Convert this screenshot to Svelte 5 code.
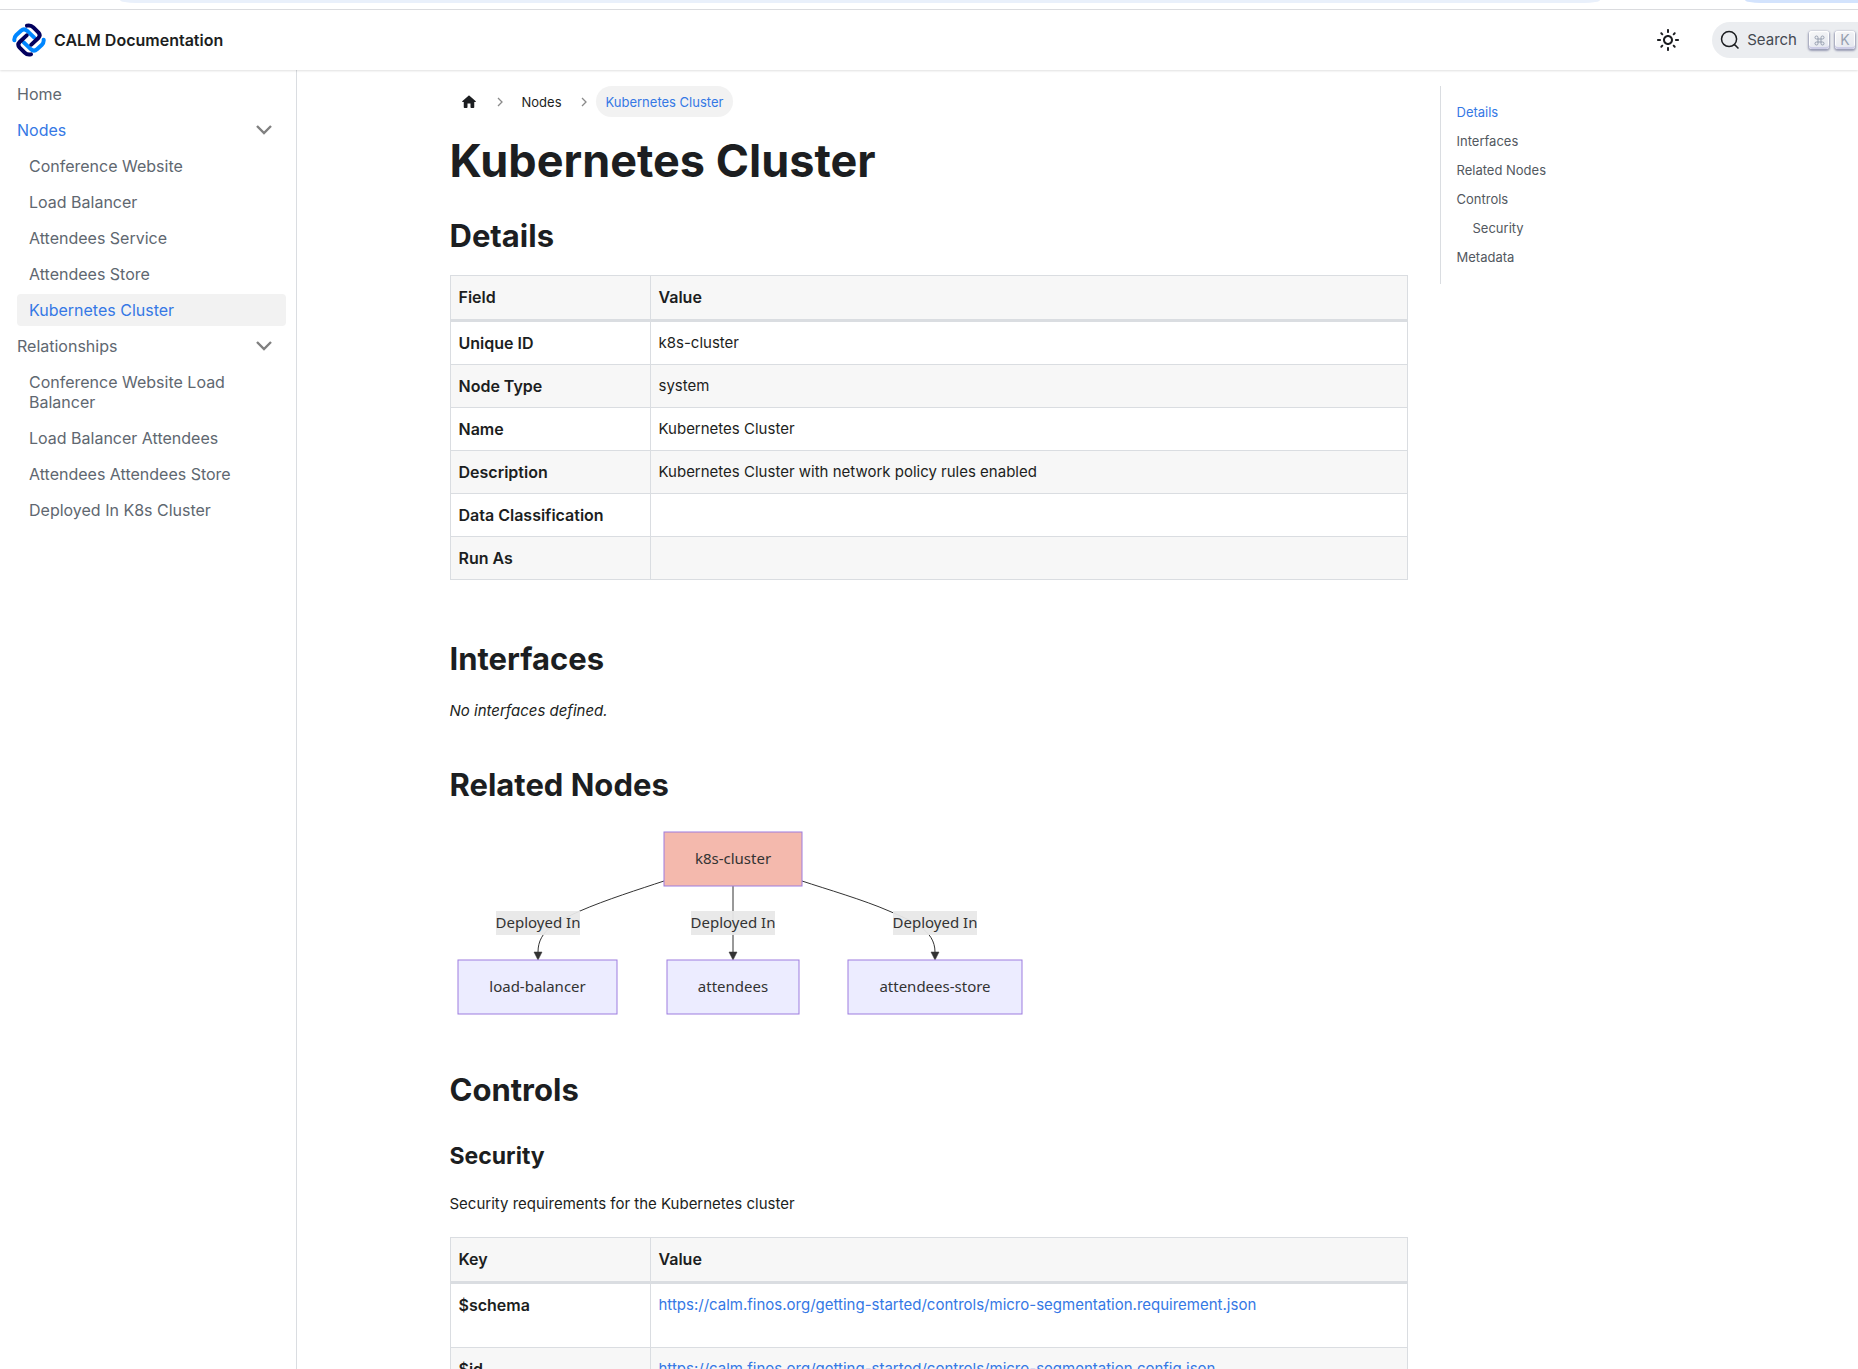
<script>
  const nodes = ['Conference Website', 'Load Balancer', 'Attendees Service', 'Attendees Store', 'Kubernetes Cluster'];
  const relationships = ['Conference Website Load Balancer', 'Load Balancer Attendees', 'Attendees Attendees Store', 'Deployed In K8s Cluster'];
  const current = 'Kubernetes Cluster';

  const details = [
    ['Unique ID', 'k8s-cluster'],
    ['Node Type', 'system'],
    ['Name', 'Kubernetes Cluster'],
    ['Description', 'Kubernetes Cluster with network policy rules enabled'],
    ['Data Classification', ''],
    ['Run As', '']
  ];

  const controls = [
    ['$schema', 'https://calm.finos.org/getting-started/controls/micro-segmentation.requirement.json'],
    ['$id', 'https://calm.finos.org/getting-started/controls/micro-segmentation.config.json']
  ];

  const toc = [
    { text: 'Details', active: true },
    { text: 'Interfaces' },
    { text: 'Related Nodes' },
    { text: 'Controls' },
    { text: 'Security', nested: true },
    { text: 'Metadata' }
  ];

  const boxes = [
    { x: 214, y: 8, w: 138, text: 'k8s-cluster', root: true },
    { x: 8, y: 136, w: 159, text: 'load-balancer' },
    { x: 217, y: 136, w: 132, text: 'attendees' },
    { x: 398, y: 136, w: 174, text: 'attendees-store' }
  ];
  const edges = [
    { x: 88, d: 'M214 57C190 65 155 76 130 87C108 97 88 106 88 128' },
    { x: 283, d: 'M283 62V128' },
    { x: 485, d: 'M352 57C376 65 414 76 439 87C462 97 485 106 485 128' }
  ];
</script>

{#snippet group(title, items, active)}
  <li>
    <button class="item group" class:active aria-expanded="true">
      {title}
      <svg width="20" height="12" viewBox="0 0 20 12" aria-hidden="true"><path d="M3 2l7 7 7-7" fill="none" stroke="#808080" stroke-width="2.4" /></svg>
    </button>
    <ul class="sub">
      {#each items as item}
        <li><a class="item" class:current={item === current} href="#top">{item}</a></li>
      {/each}
    </ul>
  </li>
{/snippet}

{#snippet crumbArrow()}
  <svg class="arrow" width="8" height="12" viewBox="0 0 8 12" aria-hidden="true"><path d="M2 2l4 4-4 4" fill="none" stroke="#8a8a8a" stroke-width="1.3" /></svg>
{/snippet}

<div class="page">
  <div class="chrome" aria-hidden="true">
    <span class="address"></span>
    <span class="profile"></span>
  </div>

  <header class="navbar">
    <a class="brand" href="#top">
      <svg width="34" height="34" viewBox="-51 -51 102 102" fill="none" stroke-width="12" stroke-linecap="round" stroke-linejoin="round" aria-hidden="true">
        <g stroke="#0086ff">
          <path d="M-44 1C-45-7-43-10-38-15L-24-28Q-15-36-6-28L15-8" />
          <path d="M44-1C45 7 43 10 38 15L24 28Q15 36 6 28L-15 8" />
        </g>
        <g stroke="#03005e">
          <path d="M-6-43C2-45 8-43 13-38L28-23Q36-14 28-6L7 14" />
          <path d="M6 43C-2 45-8 43-13 38L-28 23Q-36 14-28 6L-7-14" />
        </g>
      </svg>
      <span>CALM Documentation</span>
    </a>
    <button class="theme" aria-label="Switch colour mode">
      <svg width="24" height="24" viewBox="0 0 24 24" aria-hidden="true">
        <path fill="#1c1e21" d="M12,9c1.65,0,3,1.35,3,3s-1.35,3-3,3s-3-1.35-3-3S10.35,9,12,9 M12,7c-2.76,0-5,2.24-5,5s2.24,5,5,5s5-2.24,5-5 S14.76,7,12,7L12,7z M2,13l2,0c0.55,0,1-0.45,1-1s-0.45-1-1-1l-2,0c-0.55,0-1,0.45-1,1S1.45,13,2,13z M20,13l2,0c0.55,0,1-0.45,1-1 s-0.45-1-1-1l-2,0c-0.55,0-1,0.45-1,1S19.45,13,20,13z M11,2v2c0,0.55,0.45,1,1,1s1-0.45,1-1V2c0-0.55-0.45-1-1-1S11,1.45,11,2z M11,20v2c0,0.55,0.45,1,1,1s1-0.45,1-1v-2c0-0.55-0.45-1-1-1C11.45,19,11,19.45,11,20z M5.99,4.58c-0.39-0.39-1.03-0.39-1.41,0 c-0.39,0.39-0.39,1.03,0,1.41l1.06,1.06c0.39,0.39,1.03,0.39,1.41,0s0.39-1.03,0-1.41L5.99,4.58z M18.36,16.95 c-0.39-0.39-1.03-0.39-1.41,0c-0.39,0.39-0.39,1.03,0,1.41l1.06,1.06c0.39,0.39,1.03,0.39,1.41,0c0.39-0.39,0.39-1.03,0-1.41 L18.36,16.95z M19.42,5.99c0.39-0.39,0.39-1.03,0-1.41c-0.39-0.39-1.03-0.39-1.41,0l-1.06,1.06c-0.39,0.39-0.39,1.03,0,1.41 s1.03,0.39,1.41,0L19.42,5.99z M7.05,18.36c0.39-0.39,0.39-1.03,0-1.41c-0.39-0.39-1.03-0.39-1.41,0l-1.06,1.06 c-0.39,0.39-0.39,1.03,0,1.41s1.03,0.39,1.41,0L7.05,18.36z" />
      </svg>
    </button>
    <button class="search">
      <svg width="20" height="20" viewBox="0 0 20 20" aria-hidden="true"><path d="M14.386 14.386l4.0877 4.0877-4.0877-4.0877c-2.9418 2.9419-7.7115 2.9419-10.6533 0-2.9419-2.9418-2.9419-7.7115 0-10.6533 2.9418-2.9419 7.7115-2.9419 10.6533 0 2.9419 2.9418 2.9419 7.7115 0 10.6533z" stroke="#1c1e21" stroke-width="1.5" fill="none" stroke-linecap="round" /></svg>
      <span class="label">Search</span>
      <kbd><svg width="11" height="11" viewBox="0 0 11 11" aria-hidden="true"><path d="M4 4V2.500A1.500 1.500 0 1 0 2.500 4H8.500A1.500 1.500 0 1 0 7 2.500V8.500A1.500 1.500 0 1 0 8.500 7H2.500A1.500 1.500 0 1 0 4 8.500Z" fill="none" stroke="#969faf" /></svg></kbd>
      <kbd>K</kbd>
    </button>
  </header>

  <div class="body">
    <nav class="sidebar" aria-label="Docs sidebar">
      <ul>
        <li><a class="item" href="#top">Home</a></li>
        {@render group('Nodes', nodes, true)}
        {@render group('Relationships', relationships, false)}
      </ul>
    </nav>

    <main id="top">
      <div class="container">
        <article>
          <nav class="crumbs" aria-label="Breadcrumbs">
            <a class="crumb" href="#top" aria-label="Home page">
              <svg width="18" height="18" viewBox="0 0 24 24" aria-hidden="true"><path d="M10 19v-5h4v5c0 .55.45 1 1 1h3c.55 0 1-.45 1-1v-7h1.700c.46 0 .68-.57.33-.87L12.670 3.600c-.38-.34-.96-.34-1.340 0l-8.360 7.530c-.34.3-.13.87.33.87H5v7c0 .55.45 1 1 1h3c.55 0 1-.45 1-1z" fill="#1c1e21" /></svg>
            </a>
            {@render crumbArrow()}
            <a class="crumb" href="#top">Nodes</a>
            {@render crumbArrow()}
            <span class="crumb here">Kubernetes Cluster</span>
          </nav>

          <h1>Kubernetes Cluster</h1>

          <h2>Details</h2>
          <table>
            <thead><tr><th>Field</th><th>Value</th></tr></thead>
            <tbody>
              {#each details as [field, value]}
                <tr><th scope="row">{field}</th><td>{value}</td></tr>
              {/each}
            </tbody>
          </table>

          <h2 class="section">Interfaces</h2>
          <p><em>No interfaces defined.</em></p>

          <h2 class="section">Related Nodes</h2>
          <svg class="diagram" width="581" height="198" viewBox="0 0 581 198" role="img" aria-label="Nodes deployed in k8s-cluster">
            {#each edges as edge}
              <path d={edge.d} fill="none" stroke="#333" />
              <path d="M{edge.x - 4} 128h8l-4 8z" fill="#333" stroke="#333" stroke-width="0.5" />
              <rect x={edge.x - 42} y="87" width="84" height="24" fill="#e8e8e8" fill-opacity="0.94" />
              <text x={edge.x} y="104">Deployed In</text>
            {/each}
            {#each boxes as box}
              <rect x={box.x} y={box.y} width={box.w} height="54" fill={box.root ? '#f4b9ad' : '#ececff'} stroke="#9d7ddf" />
              <text x={box.x + box.w / 2} y={box.y + 32}>{box.text}</text>
            {/each}
          </svg>

          <h2 class="section">Controls</h2>
          <h3>Security</h3>
          <p>Security requirements for the Kubernetes cluster</p>
          <table class="tall">
            <thead><tr><th>Key</th><th>Value</th></tr></thead>
            <tbody>
              {#each controls as [key, url]}
                <tr><th scope="row">{key}</th><td><a href={url}>{url}</a></td></tr>
              {/each}
            </tbody>
          </table>
        </article>

        <aside>
          <ul class="toc">
            {#each toc as entry}
              <li class:nested={entry.nested}><a class:active={entry.active} href="#top">{entry.text}</a></li>
            {/each}
          </ul>
        </aside>
      </div>
    </main>
  </div>
</div>

<style>
  :global(body) {
    margin: 0;
    background: #fff;
  }
  .page {
    height: 100vh;
    overflow: hidden;
    display: flex;
    flex-direction: column;
    font: 15px/26px Inter, "Liberation Sans", sans-serif;
    color: #1c1e21;
  }
  a {
    color: inherit;
    text-decoration: none;
  }
  button {
    border: 0;
    background: none;
    color: inherit;
    font: inherit;
    cursor: pointer;
  }
  ul {
    list-style: none;
    margin: 0;
    padding: 0;
  }

  .chrome {
    flex: none;
    display: flex;
    justify-content: space-between;
    height: 9px;
    padding-left: 120px;
    border-bottom: 1px solid #dcdde0;
  }
  .chrome span {
    height: 3px;
  }
  .address {
    width: 1480px;
    background: #e9f0fb;
    border-radius: 0 0 16px 16px / 0 0 3px 3px;
  }
  .profile {
    width: 113px;
    background: #d3e3fd;
    border-radius: 0 0 0 16px / 0 0 0 3px;
  }

  .navbar {
    flex: none;
    display: flex;
    align-items: center;
    height: 60px;
    padding-left: 12px;
    box-shadow: 0 1px 2px rgba(0, 0, 0, 0.12);
    z-index: 1;
  }
  .brand {
    display: flex;
    align-items: center;
    gap: 8px;
    margin-right: auto;
  }
  .brand span {
    font-size: 16px;
    font-weight: 600;
  }
  .theme {
    display: flex;
    padding: 4px;
    margin-right: 28px;
  }
  .search {
    display: flex;
    align-items: center;
    height: 36px;
    padding: 0 0 0 8px;
    background: #ebedf0;
    border-radius: 18px 0 0 18px;
    color: #444950;
  }
  .search .label {
    padding: 0 12px 0 7px;
  }
  kbd {
    display: flex;
    align-items: center;
    justify-content: center;
    width: 20px;
    height: 18px;
    margin-right: 6px;
    border-radius: 3px;
    background: linear-gradient(-26deg, #e2e5ee, #f8f8f8);
    box-shadow: inset 0 -2px 0 #cdcde6, inset 0 0 1px 1px #fff, 0 1px 2px 1px rgba(30, 35, 90, 0.4);
    color: #969faf;
    font: 14px/18px Inter, sans-serif;
  }
  kbd:last-child {
    margin-right: 3px;
  }

  .body {
    flex: 1;
    min-height: 0;
    display: flex;
  }
  .sidebar {
    flex: none;
    box-sizing: border-box;
    width: 297px;
    padding: 8px 10px 8px 5px;
    border-right: 1px solid #dadde1;
    color: #606770;
    font-size: 16px;
    line-height: 20px;
  }
  .sidebar li + li,
  .sub {
    margin-top: 4px;
  }
  .sub {
    padding-left: 12px;
  }
  .item {
    display: block;
    padding: 6px 12px;
    border-radius: 4px;
  }
  .sub .item {
    padding-right: 48px;
  }
  .group {
    display: flex;
    align-items: center;
    justify-content: space-between;
    width: 100%;
  }
  .active,
  .current {
    color: #3578e5;
  }
  .current {
    background: #f2f2f2;
  }

  main {
    flex: 1;
    min-width: 0;
    padding-left: 32px;
  }
  .container {
    display: grid;
    grid-template-columns: 3fr 1fr;
    max-width: 1320px;
    margin: 0 auto;
    padding-top: 16px;
  }
  article,
  aside {
    min-width: 0;
    padding: 0 16px;
  }

  .crumbs {
    display: flex;
    align-items: center;
    height: 31px;
    font-size: 13px;
  }
  .crumb {
    display: flex;
    align-items: center;
    height: 31px;
    padding: 0 10px;
    border-radius: 16px;
  }
  .here {
    background: #f2f2f2;
    color: #3578e5;
  }
  .arrow {
    margin: 0 8px;
  }

  h1,
  h2,
  h3 {
    margin: 0;
    font-weight: 700;
  }
  h1 {
    margin: 14px 0 25px;
    font-size: 45px;
    line-height: 60px;
  }
  h2 {
    margin-bottom: 19px;
    font-size: 31px;
    line-height: 40px;
  }
  .section {
    margin-top: 41px;
  }
  h3 {
    margin: 31px 0 20px;
    font-size: 23px;
    line-height: 30px;
  }
  p {
    margin: 0 0 20px;
  }

  table {
    width: 100%;
    margin-bottom: 59px;
    border-collapse: collapse;
    table-layout: fixed;
  }
  th,
  td {
    height: 26px;
    padding: 8px;
    border: 1px solid #dadde1;
    text-align: left;
    vertical-align: top;
  }
  th {
    font-size: 16px;
    font-weight: 600;
  }
  thead th {
    height: 27px;
    background: #f7f7f7;
    border-bottom: 3px solid #dadde1;
  }
  thead th:first-child {
    width: 183px;
  }
  tbody tr:nth-child(even) {
    background: #f7f7f7;
  }
  .tall tbody :is(th, td) {
    padding-bottom: 29px;
  }
  td a {
    color: #3578e5;
  }

  .diagram {
    display: block;
    margin-bottom: 48px;
  }
  .diagram text {
    font: 15px "Noto Sans", sans-serif;
    fill: #333;
    text-anchor: middle;
  }

  .toc {
    padding: 12px 0 12px 16px;
    border-left: 1px solid #dadde1;
    font-size: 13px;
    line-height: 29px;
    color: #525860;
  }
  .nested {
    padding-left: 16px;
  }
</style>
